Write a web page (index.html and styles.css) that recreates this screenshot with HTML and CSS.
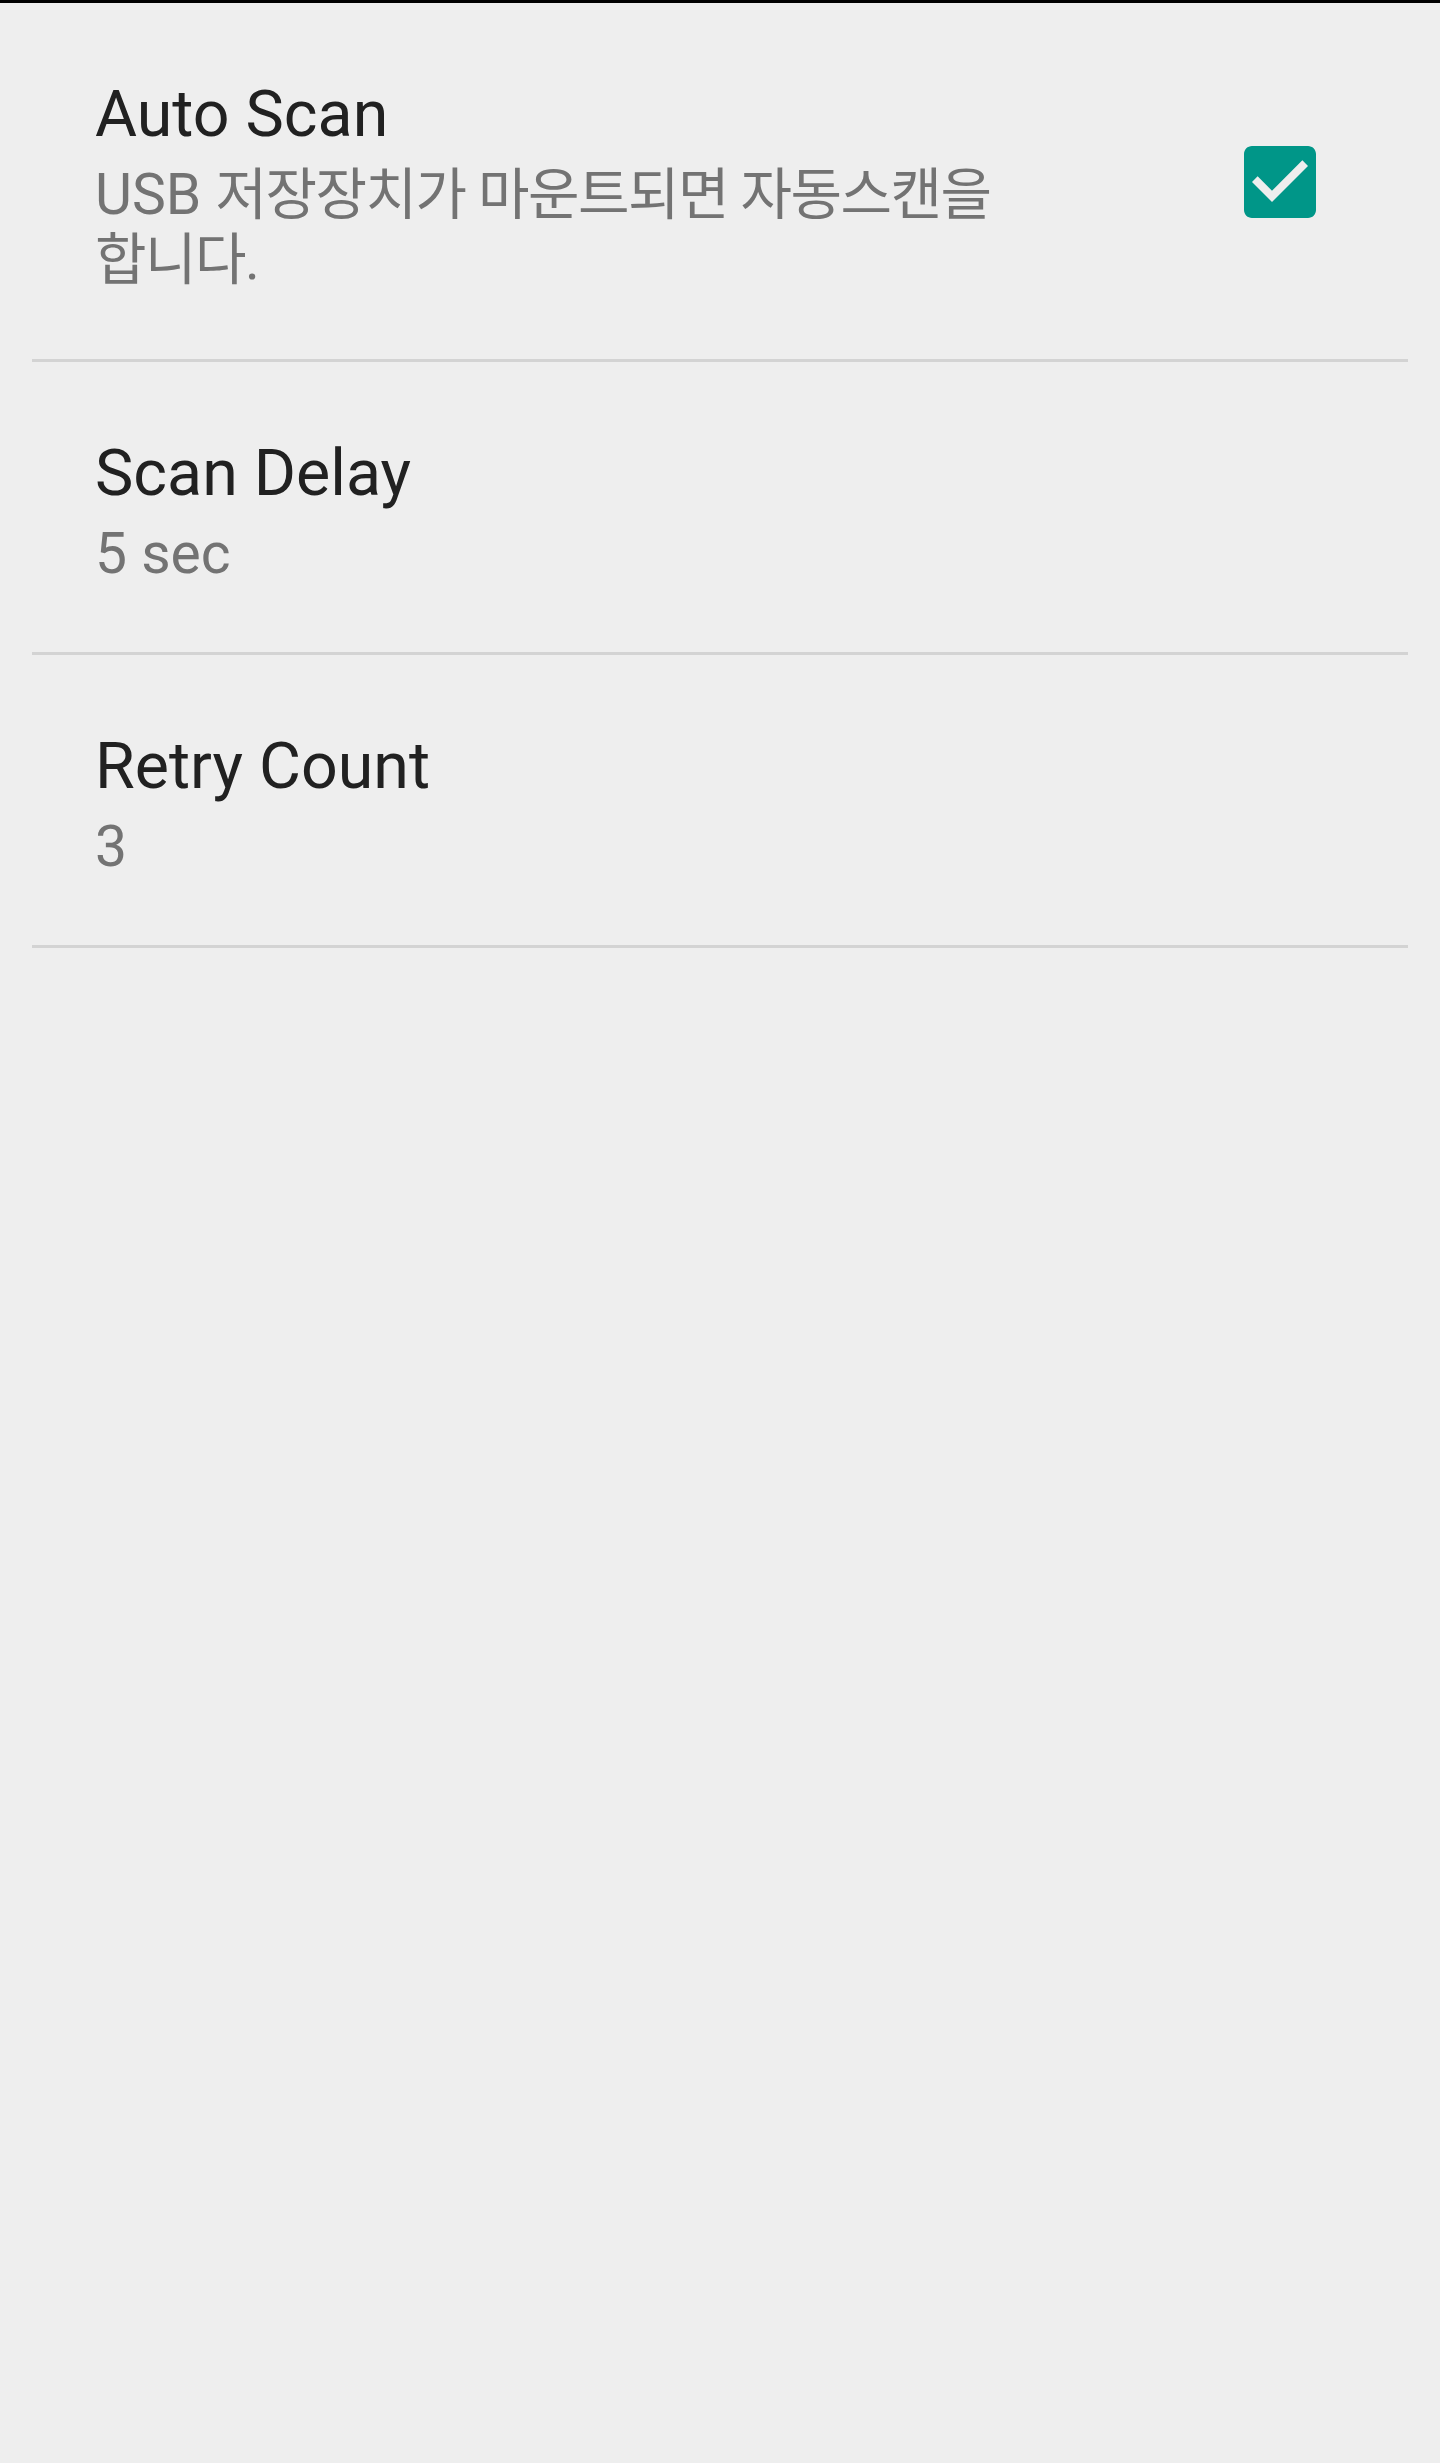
FILE: index.html
```html
<!DOCTYPE html>
<html lang="ko">
<head>
    <meta charset="UTF-8">
    <meta name="viewport" content="width=device-width, initial-scale=1.0">
    <title>Settings</title>
    <link rel="stylesheet" href="styles.css">
</head>
<body>
    <div class="topbar"></div>
    <div class="prefs">
        <!-- 자동 스캔 -->
        <div class="pref">
            <div class="pref-text">
                <div class="pref-title">Auto Scan</div>
                <div class="pref-summary">USB <span class="ko">저장장치가 마운트되면 자동스캔을 합니다.</span></div>
            </div>
            <div class="pref-widget">
                <svg class="checkbox" viewBox="0 0 24 24" width="96" height="96">
                    <path fill-rule="evenodd" d="M19 3H5c-1.11 0-2 .9-2 2v14c0 1.1.89 2 2 2h14c1.11 0 2-.9 2-2V5c0-1.1-.89-2-2-2zm-9 14l-5-5 1.41-1.41L10 14.17l7.59-7.59L19 8l-9 9z"/>
                </svg>
            </div>
        </div>
        <div class="pref">
            <div class="pref-text">
                <div class="pref-title">Scan Delay</div>
                <div class="pref-summary">5 sec</div>
            </div>
        </div>
        <div class="pref">
            <div class="pref-text">
                <div class="pref-title">Retry Count</div>
                <div class="pref-summary">3</div>
            </div>
        </div>
    </div>
</body>
</html>
```

FILE: styles.css
```css
body{
    margin: 0;
    background-color: #eeeeee;
    font-family: Roboto, "Noto Sans CJK KR", sans-serif;
}

.topbar{
    height: 3px;
    background-color: #000000;
}

.pref{
    display: flex;
    align-items: center;
    margin: 0 32px;
    padding: 74px 80px 66px 63px;
    border-bottom: 3px solid #d3d3d3;
}

.pref-text{
    flex: 1;
    max-width: 990px;
}

.pref-title{
    font-size: 64.5px;
    line-height: 74px;
    color: #212121;
}

.pref-summary{
    margin-top: 12px;
    font-size: 57px;
    line-height: 64px;
    color: #737373;
    word-break: keep-all;
}

.ko{
    font-size: 56px;
    line-height: 65px;
    letter-spacing: -1.5px;
    font-feature-settings: "palt";
}

.pref-widget{
    margin-left: auto;
    margin-top: -6px;
    line-height: 0;
}

.checkbox{
    fill: #009688;
}
```
